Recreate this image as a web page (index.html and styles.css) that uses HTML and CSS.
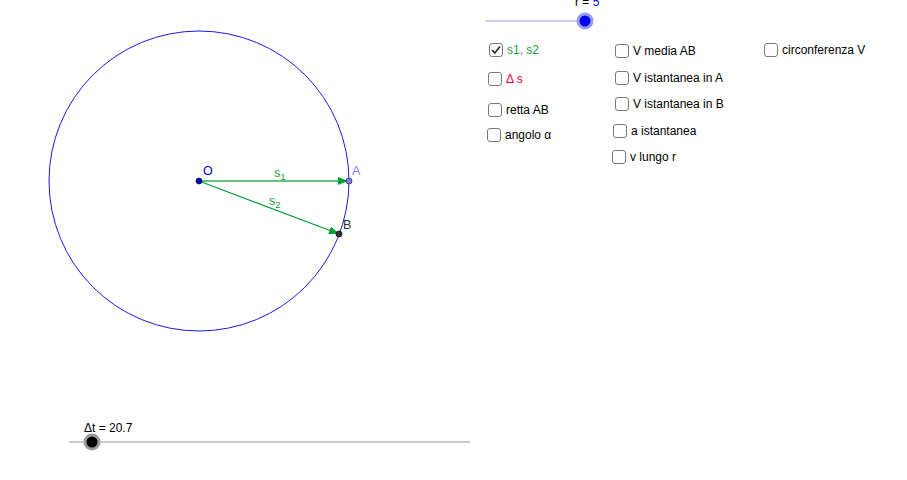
FILE: index.html
```html
<!DOCTYPE html>
<html>
<head>
<meta charset="utf-8">
<link rel="stylesheet" href="styles.css">
</head>
<body>
<div class="applet">
  <svg class="canvas" width="907" height="480" viewBox="0 0 907 480">
    <defs>
      <marker id="ah1" markerWidth="10" markerHeight="8" refX="9" refY="4" orient="auto" markerUnits="userSpaceOnUse">
        <path d="M0,0 L10,4 L0,8 Z" fill="#00a032"/>
      </marker>
      <marker id="ah2" markerWidth="10" markerHeight="8" refX="9" refY="4" orient="auto" markerUnits="userSpaceOnUse">
        <path d="M0,0 L10,4 L0,8 Z" fill="#00a032"/>
      </marker>
    </defs>
    <circle cx="199" cy="181" r="150" fill="none" stroke="#1a1ae6" stroke-width="1"/>
    <line x1="199" y1="181" x2="347" y2="181" stroke="#3cb45a" stroke-opacity="0.8" stroke-width="2" marker-end="url(#ah1)"/>
    <line x1="199" y1="181" x2="338" y2="233.5" stroke="#009a33" stroke-width="1.2" marker-end="url(#ah2)"/>
    <circle cx="199" cy="181" r="3" fill="#0000cc" stroke="#222" stroke-width="0.8"/>
    <circle cx="349" cy="181" r="3" fill="#8080ff" stroke="#333" stroke-width="0.8"/>
    <circle cx="339" cy="234" r="3" fill="#333" stroke="#111" stroke-width="0.8"/>
    <text x="203" y="175" class="lbl-o">O</text>
    <text x="352" y="175" class="lbl-a">A</text>
    <text x="343" y="229" class="lbl-b">B</text>
    <text x="274" y="177" class="lbl-s">s<tspan dy="3" class="sub">1</tspan></text>
    <text x="269" y="205" class="lbl-s">s<tspan dy="3" class="sub">2</tspan></text>

    <line x1="485" y1="21" x2="585" y2="21" stroke="#9a9aee" stroke-width="1"/>
    <circle cx="585" cy="21" r="8.5" fill="#9a9aee"/>
    <circle cx="585" cy="21" r="5.5" fill="#0000ee"/>

    <line x1="69" y1="442" x2="470" y2="442" stroke="#999" stroke-width="1"/>
    <circle cx="92" cy="442" r="8.5" fill="#9a9a9a"/>
    <circle cx="92" cy="442" r="5.5" fill="#000"/>
  </svg>

  <div class="slider-label top-label">r = <span class="blue">5</span></div>
  <div class="slider-label bottom-label">Δt = 20.7</div>

  <label class="cb c-s12"><span class="box checked"><svg width="12" height="12" viewBox="0 0 12 12"><path d="M2 6.2 L4.8 9 L10 2.5" fill="none" stroke="#333" stroke-width="1.8"/></svg></span><span class="green">s1, s2</span></label>
  <label class="cb c-ds"><span class="box"></span><span class="red">Δ s</span></label>
  <label class="cb c-retta"><span class="box"></span>retta AB</label>
  <label class="cb c-ang"><span class="box"></span>angolo α</label>
  <label class="cb c-vm"><span class="box"></span>V media AB</label>
  <label class="cb c-via"><span class="box"></span>V istantanea in A</label>
  <label class="cb c-vib"><span class="box"></span>V istantanea in B</label>
  <label class="cb c-ai"><span class="box"></span>a istantanea</label>
  <label class="cb c-vl"><span class="box"></span>v lungo r</label>
  <label class="cb c-circ"><span class="box"></span>circonferenza V</label>
</div>
</body>
</html>
```
FILE: styles.css
```css
html, body {
  margin: 0;
  padding: 0;
  background: #fff;
  overflow: hidden;
}
.applet {
  position: relative;
  width: 907px;
  height: 480px;
  font-family: "Liberation Sans", Arial, sans-serif;
  font-size: 12px;
  color: #000;
}
.canvas {
  position: absolute;
  left: 0;
  top: 0;
}
.canvas text {
  font-family: "Liberation Sans", Arial, sans-serif;
  font-size: 12.5px;
}
.lbl-o { fill: #0000ee; }
.lbl-a { fill: #8080ff; }
.lbl-b { fill: #333; }
.lbl-s { fill: #1fa040; }
.sub { font-size: 9.5px; }
.slider-label {
  position: absolute;
  font-size: 12px;
  line-height: 14px;
}
.top-label { left: 575px; top: -5px; }
.bottom-label { left: 84px; top: 421px; }
.blue { color: #0000ee; }
.green { color: #1fa040; }
.red { color: #e8003c; }
.cb {
  position: absolute;
  display: flex;
  align-items: center;
  gap: 4px;
  line-height: 14px;
  white-space: nowrap;
}
.box {
  box-sizing: border-box;
  width: 14px;
  height: 14px;
  border: 1.6px solid #7a7a7a;
  border-radius: 3px;
  display: flex;
  align-items: center;
  justify-content: center;
  background: #fff;
}
.c-s12 { left: 489px; top: 43px; }
.c-ds { left: 488px; top: 72px; }
.c-retta { left: 488px; top: 103px; }
.c-ang { left: 487px; top: 128px; }
.c-vm { left: 615px; top: 44px; }
.c-via { left: 615px; top: 71px; }
.c-vib { left: 615px; top: 97px; }
.c-ai { left: 613px; top: 124px; }
.c-vl { left: 612px; top: 150px; }
.c-circ { left: 764px; top: 43px; }
```
